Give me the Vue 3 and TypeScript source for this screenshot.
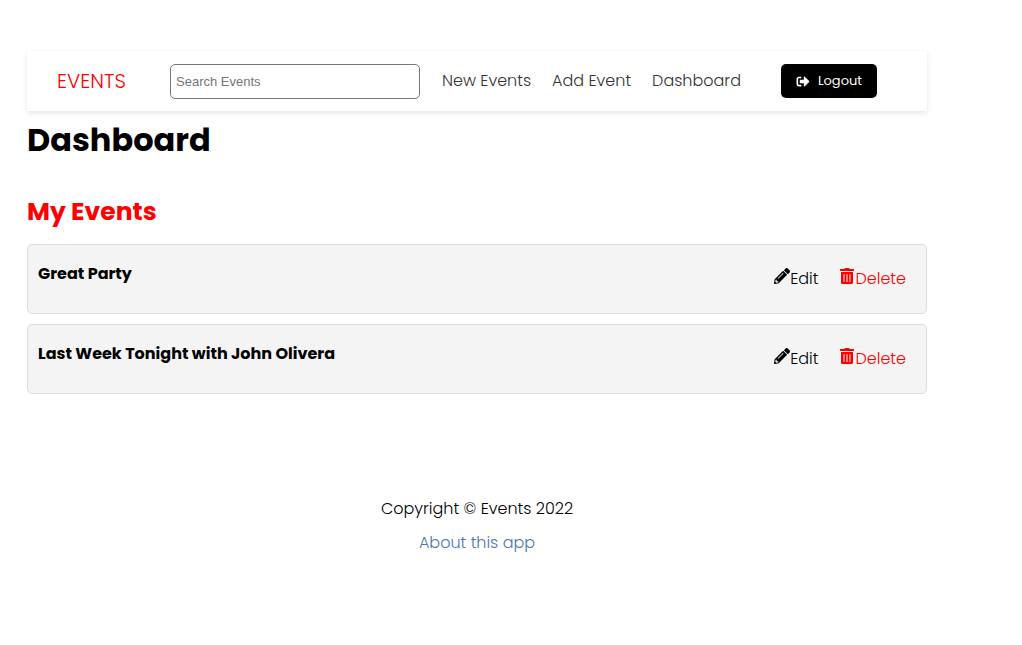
<script setup lang="ts">
import { ref } from 'vue'

interface EventItem {
  id: number
  name: string
}

const term = ref('')
const links: string[] = ['New Events', 'Add Event', 'Dashboard']
const events = ref<EventItem[]>([
  { id: 1, name: 'Great Party' },
  { id: 2, name: 'Last Week Tonight with John Olivera' },
])

function remove(id: number) {
  events.value = events.value.filter((e) => e.id !== id)
}
</script>

<template>
  <div class="page">
    <header class="header">
      <a class="logo" href="#">EVENTS</a>
      <form class="search" @submit.prevent>
        <input v-model="term" type="text" placeholder="Search Events" aria-label="Search Events" />
      </form>
      <nav class="nav">
        <a v-for="link in links" :key="link" href="#">{{ link }}</a>
      </nav>
      <button class="logout" type="button">
        <svg viewBox="0 0 512 512" aria-hidden="true">
          <path d="M497 273L329 441c-15 15-41 4.5-41-17v-96H152c-13.3 0-24-10.7-24-24v-96c0-13.3 10.7-24 24-24h136V88c0-21.4 25.9-32 41-17l168 168c9.3 9.4 9.3 24.6 0 34zM192 436v-40c0-6.6-5.4-12-12-12H96c-17.7 0-32-14.3-32-32V160c0-17.7 14.3-32 32-32h84c6.6 0 12-5.4 12-12V76c0-6.6-5.4-12-12-12H96c-53 0-96 43-96 96v192c0 53 43 96 96 96h84c6.6 0 12-5.4 12-12z" />
        </svg>
        <span>Logout</span>
      </button>
    </header>

    <main>
      <h1>Dashboard</h1>
      <h2>My Events</h2>
      <ul class="list">
        <li v-for="event in events" :key="event.id" class="event">
          <h3>{{ event.name }}</h3>
          <div class="actions">
            <a class="edit" href="#">
              <svg class="pencil" viewBox="0 0 512 512" aria-hidden="true">
                <path d="M497.9 142.1l-46.1 46.1c-4.7 4.7-12.3 4.7-17 0l-111-111c-4.7-4.7-4.7-12.3 0-17l46.1-46.1c18.7-18.7 49.1-18.7 67.9 0l60.1 60.1c18.8 18.7 18.8 49.1 0 67.9zM284.2 99.8L21.6 362.4.4 483.9c-2.9 16.4 11.4 30.6 27.8 27.8l121.5-21.3 262.6-262.6c4.7-4.7 4.7-12.3 0-17l-111-111c-4.8-4.7-12.4-4.7-17.1 0zM124.1 339.9c-5.5-5.5-5.5-14.3 0-19.8l154-154c5.5-5.5 14.3-5.5 19.8 0s5.5 14.3 0 19.8l-154 154c-5.5 5.5-14.3 5.5-19.8 0zM88 424h48v36.3l-64.5 11.3-31.1-31.1L51.7 376H88v48z" />
              </svg>
              <span>Edit</span>
            </a>
            <a class="delete" href="#" @click.prevent="remove(event.id)">
              <svg class="trash" viewBox="0 0 448 512" aria-hidden="true">
                <path d="M32 464a48 48 0 0 0 48 48h288a48 48 0 0 0 48-48V128H32zm272-256a16 16 0 0 1 32 0v224a16 16 0 0 1-32 0zm-96 0a16 16 0 0 1 32 0v224a16 16 0 0 1-32 0zm-96 0a16 16 0 0 1 32 0v224a16 16 0 0 1-32 0zM432 32H312l-9.4-18.7A24 24 0 0 0 281.1 0H166.8a23.72 23.72 0 0 0-21.4 13.3L136 32H16A16 16 0 0 0 0 48v32a16 16 0 0 0 16 16h416a16 16 0 0 0 16-16V48a16 16 0 0 0-16-16z" />
              </svg>
              <span>Delete</span>
            </a>
          </div>
        </li>
      </ul>
    </main>

    <footer class="footer">
      <p>Copyright © Events 2022</p>
      <a href="#">About this app</a>
    </footer>
  </div>
</template>

<style>
body {
  background: #fff;
}
</style>

<style scoped>
.page {
  max-width: 900px;
  margin: 51px 95px 0 27px;
  font-family: Poppins, Inter, "Open Sans", sans-serif;
  font-size: 16px;
  font-weight: 300;
  line-height: 24px;
  color: #000;
}

a {
  color: inherit;
  text-decoration: none;
}

svg {
  flex: none;
  fill: currentColor;
}

.header {
  display: flex;
  align-items: center;
  min-height: 60px;
  padding: 0 50px 0 30px;
  box-sizing: border-box;
  box-shadow: 0 2px 5px rgba(0, 0, 0, 0.1);
}

.logo {
  flex: 0 0 113px;
  font-size: 20px;
  color: #f00;
}

.search input {
  display: block;
  width: 250px;
  height: 35px;
  padding: 5px;
  box-sizing: border-box;
  border: 1px solid #767676;
  border-radius: 5px;
  background: #fff;
  font-family: "Liberation Sans", Arial, sans-serif;
  font-size: 13px;
  font-weight: 400;
}

.search input::placeholder {
  color: #757575;
}

.nav {
  display: flex;
  gap: 21px;
  margin-left: 22px;
  color: #333;
  white-space: nowrap;
}

.logout {
  display: flex;
  align-items: center;
  justify-content: center;
  gap: 8px;
  width: 96px;
  height: 34px;
  margin-left: auto;
  padding: 0;
  border: 0;
  border-radius: 5px;
  background: #000;
  color: #fff;
  font-family: inherit;
  font-size: 13px;
  font-weight: 400;
}

.logout svg {
  width: 14px;
  height: 13px;
}

h1,
h2,
h3 {
  margin: 0;
}

h1 {
  padding-top: 5px;
  font-size: 32px;
  font-weight: 700;
  line-height: 48px;
}

h2 {
  margin: 29px 0 13px;
  font-size: 25px;
  font-weight: 700;
  line-height: 38px;
  color: #f00;
}

.list {
  display: flex;
  flex-direction: column;
  gap: 10px;
  margin: 0;
  padding: 0;
  list-style: none;
}

.event {
  display: flex;
  justify-content: space-between;
  min-height: 70px;
  padding: 17px 20px 16px 10px;
  box-sizing: border-box;
  border: 1px solid #ddd;
  border-radius: 5px;
  background: #f4f4f4;
}

h3 {
  font-size: 16px;
  font-weight: 700;
}

.actions {
  display: flex;
  gap: 21px;
  padding-top: 5px;
}

.actions a {
  display: flex;
}

.pencil {
  width: 16px;
  height: 16px;
  margin-top: 1px;
}

.trash {
  width: 16px;
  height: 16px;
  margin-top: 1px;
}

.delete {
  color: #f00;
}

.footer {
  margin-top: 103px;
  text-align: center;
}

.footer p {
  margin: 0 0 10px;
}

.footer a {
  color: #4a77b4;
}
</style>
